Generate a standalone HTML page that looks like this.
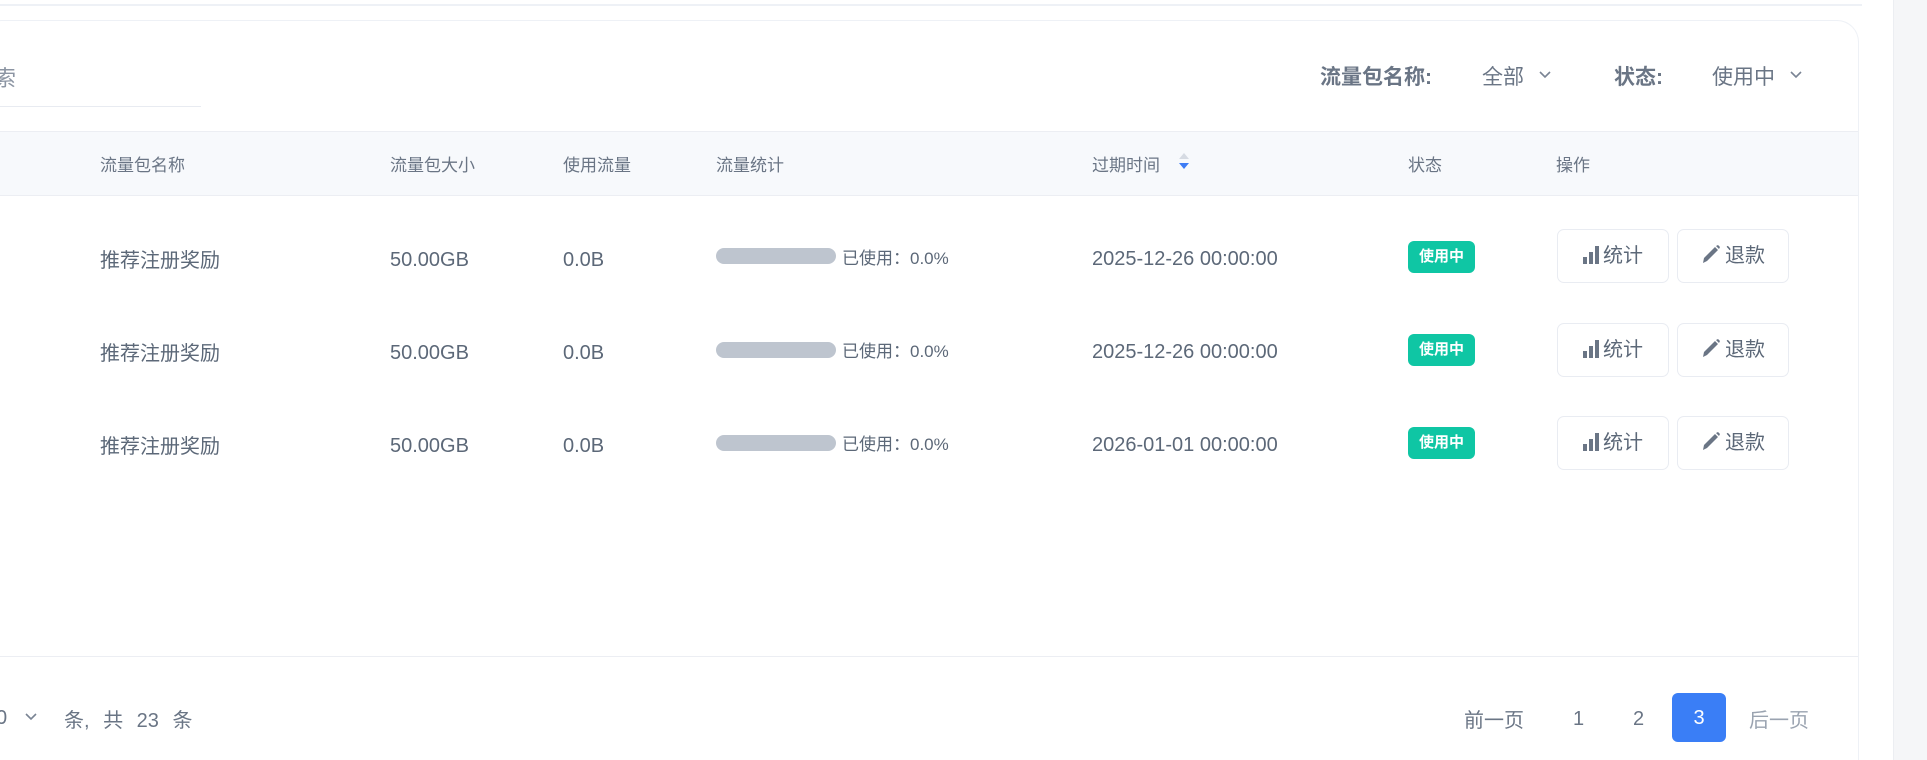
<!DOCTYPE html>
<html style="height:760px;overflow:hidden"><head><meta charset="utf-8"><style>
*{margin:0;padding:0;box-sizing:border-box}
body{width:1927px;height:760px;background:#fff;overflow:hidden;font-family:"Liberation Sans","Noto Sans CJK SC",sans-serif;color:#5c6878}
#w{position:relative;width:1927px;height:760px;overflow:hidden}
.a{position:absolute;white-space:nowrap}
.hd{font-size:17px;color:#6a7585;top:151px}
.c{font-size:20px;color:#5c6878}
.pb{position:absolute;left:716px;width:120px;height:16px;border-radius:8px;background:#bec5cf}
.pt{font-size:17px;color:#5c6878}
.bd{position:absolute;left:1408px;width:67px;height:32px;border-radius:6px;background:#0fc6a4;color:#fff;font-size:15px;font-weight:bold;text-align:center;line-height:32px}
.bt{position:absolute;width:112px;height:54px;border:1px solid #e9ecf2;border-radius:7px;font-size:20px;color:#5c6878;text-align:center;line-height:52px}
.bt svg{vertical-align:-2px;margin-right:4px}
</style></head><body><div id="w">
<div class="a" style="left:0;top:4px;width:1862px;height:2px;background:#eef1f6"></div>
<div class="a" style="left:1893px;top:0;width:34px;height:760px;background:#f5f6f8;border-left:1px solid #eceef2"></div>
<div class="a" style="left:-20px;top:20px;width:1879px;height:740px;border:1px solid #eef1f6;border-bottom:none;border-radius:22px 22px 0 0;background:#fff"></div>
<div class="a" style="left:-6px;top:61px;font-size:22px;color:#8c95a3">索</div>
<div class="a" style="left:0;top:106px;width:201px;height:1px;background:#e8ebf1"></div>
<div class="a" style="left:1320px;top:61px;font-size:21px;font-weight:bold;color:#6a7585">流量包名称:</div>
<div class="a" style="left:1482px;top:61px;font-size:21px;color:#6a7585">全部</div>
<svg class="a" style="left:1538px;top:70px" width="14" height="10"><path d="M2 2l5 5 5-5" fill="none" stroke="#7a8494" stroke-width="1.6"/></svg>
<div class="a" style="left:1614px;top:61px;font-size:21px;font-weight:bold;color:#6a7585">状态:</div>
<div class="a" style="left:1712px;top:61px;font-size:21px;color:#6a7585">使用中</div>
<svg class="a" style="left:1789px;top:70px" width="14" height="10"><path d="M2 2l5 5 5-5" fill="none" stroke="#7a8494" stroke-width="1.6"/></svg>
<div class="a" style="left:0;top:131px;width:1858px;height:65px;background:#f7f9fc;border-top:1px solid #eceef3;border-bottom:1px solid #eceef3"></div>
<div class="a hd" style="left:100px">流量包名称</div>
<div class="a hd" style="left:390px">流量包大小</div>
<div class="a hd" style="left:563px">使用流量</div>
<div class="a hd" style="left:716px">流量统计</div>
<div class="a hd" style="left:1092px">过期时间</div>
<svg class="a" style="left:1178px;top:151px" width="12" height="20"><path d="M6 2l5 6H1z" fill="#d6dbe3"/><path d="M6 18l5-6H1z" fill="#3d7cf5"/></svg>
<div class="a hd" style="left:1408px">状态</div>
<div class="a hd" style="left:1556px">操作</div>

<div class="a c" style="left:100px;top:244px">推荐注册奖励</div><div class="a c" style="left:390px;top:249px">50.00GB</div><div class="a c" style="left:563px;top:249px">0.0B</div>
<div class="pb" style="top:248px"></div><div class="a pt" style="left:842px;top:244px">已使用：0.0%</div>
<div class="a c" style="left:1092px;top:248px">2025-12-26 00:00:00</div>
<div class="bd" style="top:241px">使用中</div>
<div class="bt" style="left:1557px;top:229px"><svg width="16" height="18"><rect x="0" y="11" width="4" height="7" fill="#6a7585"/><rect x="6" y="6" width="4" height="12" fill="#6a7585"/><rect x="12" y="0" width="4" height="18" fill="#6a7585"/></svg>统计</div>
<div class="bt" style="left:1677px;top:229px"><svg width="20" height="20"><path d="M2 19l1-5L14 3l3 3L6 17z M15 2l2-1 2 2-1 2z" fill="#6a7585"/></svg>退款</div>

<div class="a c" style="left:100px;top:337px">推荐注册奖励</div><div class="a c" style="left:390px;top:342px">50.00GB</div><div class="a c" style="left:563px;top:342px">0.0B</div>
<div class="pb" style="top:342px"></div><div class="a pt" style="left:842px;top:337px">已使用：0.0%</div>
<div class="a c" style="left:1092px;top:341px">2025-12-26 00:00:00</div>
<div class="bd" style="top:334px">使用中</div>
<div class="bt" style="left:1557px;top:323px"><svg width="16" height="18"><rect x="0" y="11" width="4" height="7" fill="#6a7585"/><rect x="6" y="6" width="4" height="12" fill="#6a7585"/><rect x="12" y="0" width="4" height="18" fill="#6a7585"/></svg>统计</div>
<div class="bt" style="left:1677px;top:323px"><svg width="20" height="20"><path d="M2 19l1-5L14 3l3 3L6 17z M15 2l2-1 2 2-1 2z" fill="#6a7585"/></svg>退款</div>

<div class="a c" style="left:100px;top:430px">推荐注册奖励</div><div class="a c" style="left:390px;top:435px">50.00GB</div><div class="a c" style="left:563px;top:435px">0.0B</div>
<div class="pb" style="top:435px"></div><div class="a pt" style="left:842px;top:430px">已使用：0.0%</div>
<div class="a c" style="left:1092px;top:434px">2026-01-01 00:00:00</div>
<div class="bd" style="top:427px">使用中</div>
<div class="bt" style="left:1557px;top:416px"><svg width="16" height="18"><rect x="0" y="11" width="4" height="7" fill="#6a7585"/><rect x="6" y="6" width="4" height="12" fill="#6a7585"/><rect x="12" y="0" width="4" height="18" fill="#6a7585"/></svg>统计</div>
<div class="bt" style="left:1677px;top:416px"><svg width="20" height="20"><path d="M2 19l1-5L14 3l3 3L6 17z M15 2l2-1 2 2-1 2z" fill="#6a7585"/></svg>退款</div>

<div class="a" style="left:0;top:656px;width:1858px;height:1px;background:#eceef3"></div>
<div class="a" style="left:-4px;top:707px;font-size:20px;color:#6a7585">0</div>
<svg class="a" style="left:24px;top:712px" width="14" height="10"><path d="M2 2l5 5 5-5" fill="none" stroke="#7a8494" stroke-width="1.6"/></svg>
<div class="a" style="left:64px;top:704px;font-size:20px;color:#6a7585;word-spacing:8px">条, 共 23 条</div>
<div class="a" style="left:1464px;top:704px;font-size:20px;color:#6a7585">前一页</div>
<div class="a" style="left:1573px;top:708px;font-size:20px;color:#6a7585">1</div>
<div class="a" style="left:1633px;top:708px;font-size:20px;color:#6a7585">2</div>
<div class="a" style="left:1672px;top:693px;width:54px;height:49px;border-radius:6px;background:#3a7ef6;color:#fff;font-size:20px;text-align:center;line-height:51px">3</div>
<div class="a" style="left:1749px;top:704px;font-size:20px;color:#9aa3b0">后一页</div>
</div></body></html>
